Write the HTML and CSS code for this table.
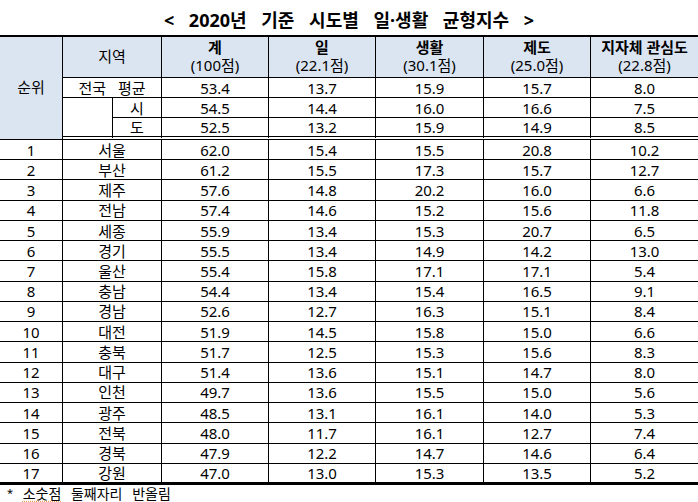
FILE: index.html
```html
<!DOCTYPE html>
<html lang="ko">
<head>
<meta charset="utf-8">
<title>2020년 기준 시도별 일·생활 균형지수</title>
<link rel="stylesheet" href="styles.css">
</head>
<body>
<div class="title">&lt; 2020년 기준 시도별 일·생활 균형지수 &gt;</div>
<table class="tbl">
  <colgroup>
    <col class="c-rank">
    <col class="c-reg1">
    <col class="c-reg2">
    <col class="c-107">
    <col class="c-107">
    <col class="c-108">
    <col class="c-107">
    <col class="c-last">
  </colgroup>
  <thead>
    <tr class="h1">
      <th class="hd" rowspan="4">순위</th>
      <th class="hd norm" colspan="2">지역</th>
      <th class="hd"><b>계</b><br><span>(100점)</span></th>
      <th class="hd"><b>일</b><br><span>(22.1점)</span></th>
      <th class="hd"><b>생활</b><br><span>(30.1점)</span></th>
      <th class="hd"><b>제도</b><br><span>(25.0점)</span></th>
      <th class="hd last"><b>지자체 관심도</b><br><span>(22.8점)</span></th>
    </tr>
    <tr class="h2">
      <td colspan="2" class="wide">전국 평균</td>
      <td>53.4</td><td>13.7</td><td>15.9</td><td>15.7</td><td class="last">8.0</td>
    </tr>
    <tr class="h3">
      <td rowspan="2" class="blank end"></td>
      <td>시</td>
      <td>54.5</td><td>14.4</td><td>16.0</td><td>16.6</td><td class="last">7.5</td>
    </tr>
    <tr class="h4 end">
      <td class="end">도</td>
      <td class="end">52.5</td><td class="end">13.2</td><td class="end">15.9</td><td class="end">14.9</td><td class="end last">8.5</td>
    </tr>
  </thead>
  <tbody>
    <tr><td>1</td><td colspan="2">서울</td><td>62.0</td><td>15.4</td><td>15.5</td><td>20.8</td><td class="last">10.2</td></tr>
    <tr><td>2</td><td colspan="2">부산</td><td>61.2</td><td>15.5</td><td>17.3</td><td>15.7</td><td class="last">12.7</td></tr>
    <tr><td>3</td><td colspan="2">제주</td><td>57.6</td><td>14.8</td><td>20.2</td><td>16.0</td><td class="last">6.6</td></tr>
    <tr><td>4</td><td colspan="2">전남</td><td>57.4</td><td>14.6</td><td>15.2</td><td>15.6</td><td class="last">11.8</td></tr>
    <tr><td>5</td><td colspan="2">세종</td><td>55.9</td><td>13.4</td><td>15.3</td><td>20.7</td><td class="last">6.5</td></tr>
    <tr><td>6</td><td colspan="2">경기</td><td>55.5</td><td>13.4</td><td>14.9</td><td>14.2</td><td class="last">13.0</td></tr>
    <tr><td>7</td><td colspan="2">울산</td><td>55.4</td><td>15.8</td><td>17.1</td><td>17.1</td><td class="last">5.4</td></tr>
    <tr><td>8</td><td colspan="2">충남</td><td>54.4</td><td>13.4</td><td>15.4</td><td>16.5</td><td class="last">9.1</td></tr>
    <tr><td>9</td><td colspan="2">경남</td><td>52.6</td><td>12.7</td><td>16.3</td><td>15.1</td><td class="last">8.4</td></tr>
    <tr><td>10</td><td colspan="2">대전</td><td>51.9</td><td>14.5</td><td>15.8</td><td>15.0</td><td class="last">6.6</td></tr>
    <tr><td>11</td><td colspan="2">충북</td><td>51.7</td><td>12.5</td><td>15.3</td><td>15.6</td><td class="last">8.3</td></tr>
    <tr><td>12</td><td colspan="2">대구</td><td>51.4</td><td>13.6</td><td>15.1</td><td>14.7</td><td class="last">8.0</td></tr>
    <tr><td>13</td><td colspan="2">인천</td><td>49.7</td><td>13.6</td><td>15.5</td><td>15.0</td><td class="last">5.6</td></tr>
    <tr><td>14</td><td colspan="2">광주</td><td>48.5</td><td>13.1</td><td>16.1</td><td>14.0</td><td class="last">5.3</td></tr>
    <tr><td>15</td><td colspan="2">전북</td><td>48.0</td><td>11.7</td><td>16.1</td><td>12.7</td><td class="last">7.4</td></tr>
    <tr><td>16</td><td colspan="2">경북</td><td>47.9</td><td>12.2</td><td>14.7</td><td>14.6</td><td class="last">6.4</td></tr>
    <tr class="final"><td>17</td><td colspan="2">강원</td><td>47.0</td><td>13.0</td><td>15.3</td><td>13.5</td><td class="last">5.2</td></tr>
  </tbody>
</table>
<div class="note"><span class="star">*</span> <span class="spell">소숫점</span> 둘째자리 반올림</div>
</body>
</html>
```

FILE: styles.css
```css
html, body {
  margin: 0;
  padding: 0;
  background: #ffffff;
}
body {
  width: 698px;
  height: 502px;
  overflow: hidden;
  font-family: "Noto Sans", "Noto Sans CJK KR", sans-serif;
  color: #000;
}
.title {
  height: 35px;
  line-height: 40px;
  text-align: center;
  font-weight: bold;
  font-size: 18px;
  word-spacing: 10px;
  font-family: "Noto Sans", "Noto Sans CJK KR", sans-serif;
}
.tbl {
  width: 698px;
  table-layout: fixed;
  border-collapse: separate;
  border-spacing: 0;
  border-top: 2px solid #000;
  font-size: 15px;
}
.c-rank { width: 63px; }
.c-reg1 { width: 50px; }
.c-reg2 { width: 49px; }
.c-107 { width: 107px; }
.c-108 { width: 108px; }
.c-last { width: 107px; }

.tbl th, .tbl td {
  padding: 0;
  text-align: center;
  vertical-align: middle;
  border-right: 1px solid #000;
  border-bottom: 1px solid #000;
  line-height: 18px;
  font-weight: normal;
  white-space: nowrap;
}
.tbl .last { border-right: none; }
.hd { background: #dbe5f1; }
.hd b { font-weight: bold; }
.hd span { font-weight: normal; }
.h1 { height: 41px; }
.h1 th { line-height: 18px; padding-bottom: 2px; }
.h2, .h3 { height: 20px; }
.h4 { height: 22px; }
.tbl .end { border-bottom: 4px double #000; }
.wide { word-spacing: 8px; }
.tbl tbody tr { height: 20.24px; }
.tbl tbody tr.final td { border-bottom: 3px solid #000; }
.note {
  font-size: 14px;
  line-height: 14px;
  padding-left: 7px;
  padding-top: 1px;
  word-spacing: 6px;
}
.star { font-size: 11px; vertical-align: 2px; word-spacing: 4px; }
.spell {
  text-decoration: underline dotted #e8a15a;
  text-underline-offset: 2px;
}
```
